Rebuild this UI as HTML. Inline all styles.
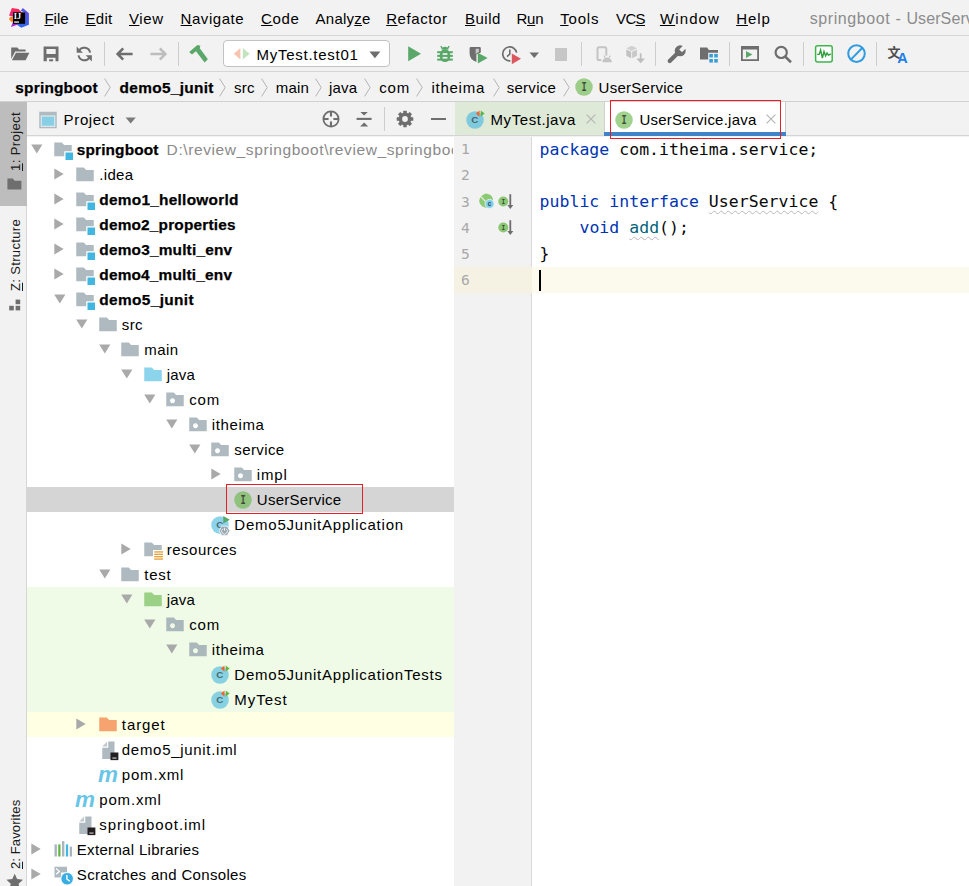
<!DOCTYPE html>
<html lang="en"><head><meta charset="utf-8"><title>springboot - UserService.java</title>
<style>
*{box-sizing:content-box}
html,body{margin:0;padding:0;width:969px;height:886px;overflow:hidden;background:#f2f2f2}
#app{width:969px;height:886px;overflow:hidden;background:#f2f2f2;position:relative;
 font-family:"Liberation Sans",sans-serif;font-size:15px;color:#000;-webkit-font-smoothing:antialiased}
.abs{position:absolute}
.i{position:absolute;display:block;overflow:visible}
.t{position:absolute;white-space:pre;line-height:25px;height:25px}
.b{font-weight:bold;font-size:15.4px;-webkit-text-stroke:.25px #000}
.g{color:#8a8a8a}
.mn{top:6px;line-height:26px}
.mn u{text-decoration-thickness:1px;text-underline-offset:1px}
.vt u{text-decoration-thickness:1px;text-underline-offset:2px}
.bc{top:74.5px}
.tb{top:41.5px}
.hd{top:106.5px}
.tab{top:106.5px}
.vt{position:absolute;font-size:13px;line-height:19px;height:19px;white-space:pre;transform-origin:0 0;transform:rotate(-90deg);color:#1a1a1a}
.ln{position:absolute;left:461px;font-family:"DejaVu Sans Mono","Liberation Mono",monospace;font-size:14.6px;line-height:26px;color:#a8a8a8}
.code{position:absolute;left:539.6px;margin:0;font-family:"DejaVu Sans Mono","Liberation Mono",monospace;font-size:16.5px;line-height:26px;color:#080808;letter-spacing:0.02px}
.k{color:#0033b3}
.m{color:#00627a}
.w{text-decoration:underline wavy #b9b9b9 1px;text-underline-offset:3px}
</style></head>
<body>
<div id="app">
<div class="abs" style="left:0;top:35px;width:969px;height:1px;background:#d6d6d6"></div>
<div class="abs" style="left:0;top:71px;width:969px;height:1px;background:#d6d6d6"></div>
<div class="abs" style="left:0;top:101px;width:969px;height:1px;background:#d1d1d1"></div>
<svg class="i" style="left:8px;top:7px" width="22" height="22" viewBox="0 0 22 22"><defs><linearGradient id="lgb" x1="0" y1="1" x2="1" y2="0"><stop offset="0" stop-color="#2A6BF0"/><stop offset=".6" stop-color="#3F5FE6"/><stop offset="1" stop-color="#8A3FD6"/></linearGradient><linearGradient id="lgp" x1="0" y1="0" x2="0" y2="1"><stop offset="0" stop-color="#FE2857"/><stop offset="1" stop-color="#E5237E"/></linearGradient></defs><path d="M3.9,1 L10.4,1.9 L13,4.6 L13,9 L5,9.8 L1.05,8.5 Z" fill="url(#lgp)"/><path d="M1.8,10.2 L5.4,9.6 L5.4,14.9 L3.2,14.7 L1.05,12.3 Z" fill="#FC801D"/><path d="M5,15 L2.9,19.9 L11.4,17 L11.4,15 Z" fill="#A62BD0"/><path d="M14.8,1 L20.9,6.2 L20.9,17.7 L13.3,20.8 L9.2,18.1 L10,16 L16.6,16 L16.6,5.3 L12.6,3.9 Z" fill="url(#lgb)"/><rect x="5" y="5.3" width="12.1" height="11.5" fill="#000"/><rect x="6.1" y="14.3" width="4.9" height="1.5" fill="#d8d8d8"/><text x="5.8" y="12" textLength="7.3" lengthAdjust="spacingAndGlyphs" font-family="Liberation Serif, serif" font-weight="bold" font-size="9.2" fill="#fff">IJ</text></svg>
<span id="t1" class="t mn" style="left:44.4px;letter-spacing:0.003px;"><u>F</u>ile</span>
<span id="t2" class="t mn" style="left:85.5px;letter-spacing:0.285px;"><u>E</u>dit</span>
<span id="t3" class="t mn" style="left:129px;letter-spacing:0.613px;"><u>V</u>iew</span>
<span id="t4" class="t mn" style="left:180.6px;letter-spacing:0.548px;"><u>N</u>avigate</span>
<span id="t5" class="t mn" style="left:261.1px;letter-spacing:0.631px;"><u>C</u>ode</span>
<span id="t6" class="t mn" style="left:315.6px;letter-spacing:0.232px;">Analy<u>z</u>e</span>
<span id="t7" class="t mn" style="left:386.2px;letter-spacing:0.587px;"><u>R</u>efactor</span>
<span id="t8" class="t mn" style="left:465px;letter-spacing:0.485px;"><u>B</u>uild</span>
<span id="t9" class="t mn" style="left:516.4px;letter-spacing:-0.177px;">R<u>u</u>n</span>
<span id="t10" class="t mn" style="left:560.2px;letter-spacing:0.814px;"><u>T</u>ools</span>
<span id="t11" class="t mn" style="left:616px;letter-spacing:-0.620px;">VC<u>S</u></span>
<span id="t12" class="t mn" style="left:659.9px;letter-spacing:1.138px;"><u>W</u>indow</span>
<span id="t13" class="t mn" style="left:736.2px;letter-spacing:0.931px;"><u>H</u>elp</span>
<span id="t14" class="t mn" style="left:809.7px;color:#8c8c8c;font-size:16px;letter-spacing:.6px;">springboot - <span style="letter-spacing:.1px">UserService.java</span></span>
<svg class="i" style="left:10px;top:44px" width="20" height="20" viewBox="0 0 20 20"><path d="M1.2,3.6 H7.4 L9,5.6 H15.6 V7.6 H5.2 L1.2,15 Z" fill="#6e6e6e"/><path d="M5.9,8.8 H19.4 L15.6,16.2 H1.9 Z" fill="#6e6e6e"/></svg>
<svg class="i" style="left:41px;top:44px" width="20" height="20" viewBox="0 0 20 20"><path fill-rule="evenodd" d="M2.6,2.4 H17.5 V17.3 H2.6 Z M5.4,5.1 V9.9 H14.7 V5.1 Z M5.8,13.8 V17.3 H14.5 V13.8 Z" fill="#6e6e6e"/><rect x="8.1" y="15.3" width="4" height="2" fill="#6e6e6e"/></svg>
<svg class="i" style="left:74px;top:44px" width="20" height="20" viewBox="0 0 20 20"><g transform="translate(20.3,0) scale(-1,1)"><path d="M4.2,8.6 A6,6 0 0 1 15.2,6.6" fill="none" stroke="#6e6e6e" stroke-width="2"/><path d="M15.8,11.4 A6,6 0 0 1 4.8,13.4" fill="none" stroke="#6e6e6e" stroke-width="2"/><path d="M17.6,2.6 V8.8 H11.4 Z" fill="#6e6e6e"/><path d="M2.4,17.4 V11.2 H8.6 Z" fill="#6e6e6e"/></g></svg>
<div class="abs" style="left:104px;top:42px;width:1px;height:24px;background:#cdcdcd"></div>
<svg class="i" style="left:114px;top:44px" width="20" height="20" viewBox="0 0 20 20"><path d="M18.6,10 H4.4 M9.2,4.4 L3.6,10 L9.2,15.6" fill="none" stroke="#6e6e6e" stroke-width="2.5"/></svg>
<svg class="i" style="left:149px;top:44px" width="20" height="20" viewBox="0 0 20 20"><path d="M1.4,10 H15.6 M10.8,4.4 L16.4,10 L10.8,15.6" fill="none" stroke="#bdbdbd" stroke-width="2.5"/></svg>
<div class="abs" style="left:178px;top:42px;width:1px;height:24px;background:#cdcdcd"></div>
<svg class="i" style="left:188px;top:43px" width="22" height="22" viewBox="0 0 22 22"><path d="M1.2,9 L9.4,2 L12.4,2.7 L11.8,5 L4,11.6 Z" fill="#59A869"/><path d="M7.4,7.6 L11.2,4.6 L19.9,16.2 L16.6,19.5 Z" fill="#59A869"/></svg>
<div class="abs" style="left:223px;top:40px;width:165px;height:25.4px;background:#fff;border:1px solid #c2c2c2;border-radius:4px"></div>
<svg class="i" style="left:233px;top:45px" width="18" height="18" viewBox="0 0 18 18"><path d="M7.4,3 V14.6 L0.8,8.8 Z" fill="#F8C4B2"/><path d="M9.8,3 V14.6 L16.6,8.8 Z" fill="#C3E4BF"/></svg>
<span id="t15" class="t tb" style="left:256.6px;letter-spacing:0.727px;">MyTest.test01</span>
<svg class="i" style="left:369.4px;top:50.6px" width="12" height="8" viewBox="0 0 12 8"><path d="M0.4,0.6 H11.4 L5.9,7.2 Z" fill="#6e6e6e"/></svg>
<svg class="i" style="left:404.6px;top:44px" width="20" height="20" viewBox="0 0 20 20"><path d="M3.2,2.2 V17.2 L16,9.7 Z" fill="#59A869"/></svg>
<svg class="i" style="left:435px;top:43.8px" width="20" height="20" viewBox="0 0 20 20"><g fill="#59A869"><ellipse cx="10" cy="11.6" rx="5.4" ry="6.5"/><path d="M6.4,5.6 A3.7,3.7 0 0 1 13.6,5.6 Z"/><rect x="2.2" y="7.2" width="15.6" height="2"/><rect x="2.2" y="10.9" width="15.6" height="2"/><rect x="2.2" y="14.6" width="15.6" height="2"/><path d="M5.2,2.4 L6.4,1.7 L8.3,4.6 L7.1,5.3 Z M14.8,2.4 L13.6,1.7 L11.7,4.6 L12.9,5.3 Z"/></g><rect x="7.6" y="9.2" width="4.8" height="1.7" fill="#f2f2f2"/><rect x="7.6" y="12.9" width="4.8" height="1.7" fill="#f2f2f2"/></svg>
<svg class="i" style="left:468px;top:45px" width="22" height="20" viewBox="0 0 22 20"><path d="M1.6,3.2 Q1.6,2 2.8,2 H11.6 Q12.8,2 12.8,3.2 V7.4 L8.4,9.6 V17 Q1.6,14.6 1.6,8.6 Z" fill="#6e6e6e"/><path d="M7.6,3.8 H11 V7 L7.6,9 Z" fill="#c4c4c4"/><path d="M9.8,7.8 V18.4 L19.6,13.1 Z" fill="#59A869"/></svg>
<svg class="i" style="left:501px;top:44.6px" width="22" height="21" viewBox="0 0 22 21"><path d="M9.4,15.9 A7,7 0 1 1 15.6,7.6" fill="none" stroke="#6e6e6e" stroke-width="1.7"/><path d="M8.8,4.4 V9.2 L6,11.6" fill="none" stroke="#6e6e6e" stroke-width="1.6"/><path d="M10.8,8.4 V19.2 L20,13.8 Z" fill="#DB5860"/></svg>
<svg class="i" style="left:528.5px;top:52px" width="11" height="7" viewBox="0 0 11 7"><path d="M0.5,0.5 H10 L5.25,6 Z" fill="#6e6e6e"/></svg>
<div class="abs" style="left:554.5px;top:48px;width:12.5px;height:12.5px;background:#c6c6c6"></div>
<div class="abs" style="left:581px;top:42px;width:1px;height:24px;background:#cdcdcd"></div>
<svg class="i" style="left:594px;top:44px" width="22" height="20" viewBox="0 0 22 20"><rect x="3.5" y="3.3" width="8.8" height="12.8" rx="1.6" fill="none" stroke="#c4c4c4" stroke-width="2"/><rect x="7.3" y="11.6" width="9" height="8" fill="#f2f2f2"/><path d="M8.3,18.3 A4.8,4.8 0 0 1 17.9,18.3 Z" fill="#c4c4c4"/><path d="M9.8,11.6 L11.2,13.8 M16.4,11.6 L15,13.8" stroke="#c4c4c4" stroke-width="1.1"/></svg>
<svg class="i" style="left:624px;top:44px" width="22" height="20" viewBox="0 0 22 20"><path d="M7.65,1.7 L13,4.3 L7.65,6.9 L2.3,4.3 Z" fill="#d0d0d0"/><path d="M2.3,5.4 L7.2,7.8 V14.3 L2.3,11.8 Z" fill="#c2c2c2"/><path d="M13,5.4 L8.1,7.8 V14.3 L13,11.8 Z" fill="#c9c9c9"/><path d="M15.8,9.2 H17.5 V14.6 H21 L16.65,19.2 L12.3,14.6 H15.8 Z" fill="#bdbdbd"/></svg>
<div class="abs" style="left:655px;top:42px;width:1px;height:24px;background:#cdcdcd"></div>
<svg class="i" style="left:666px;top:43px" width="22" height="22" viewBox="0 0 22 22"><path d="M3.7,18 L12.4,9.4" stroke="#6e6e6e" stroke-width="4.2" stroke-linecap="round"/><circle cx="14.2" cy="7.8" r="5.5" fill="#6e6e6e"/><path d="M13.2,6.4 L18.4,1.2 L21.2,4 L16,9.2 Z" fill="#f2f2f2"/></svg>
<svg class="i" style="left:699px;top:44px" width="22" height="20" viewBox="0 0 22 20"><path d="M1,3.6 H8.2 L9.8,5.9 H19 V8.8 H9.2 V15.5 H1 Z" fill="#6e6e6e"/><g fill="#389FD6"><rect x="10.3" y="9.9" width="3.6" height="3.6"/><rect x="15.2" y="9.9" width="3.6" height="3.6"/><rect x="10.3" y="15" width="3.6" height="3.6"/><rect x="15.2" y="15" width="3.6" height="3.6"/></g></svg>
<div class="abs" style="left:729px;top:42px;width:1px;height:24px;background:#cdcdcd"></div>
<svg class="i" style="left:740px;top:44px" width="20" height="20" viewBox="0 0 20 20"><path fill-rule="evenodd" d="M1,2 H19 V17 H1 Z M2.8,5.6 V15.2 H17.2 V5.6 Z" fill="#6e6e6e"/><path d="M6,7 V14 L12.4,10.5 Z" fill="#59A869"/></svg>
<svg class="i" style="left:773px;top:44px" width="20" height="20" viewBox="0 0 20 20"><circle cx="8.2" cy="8.4" r="5.6" fill="none" stroke="#6e6e6e" stroke-width="2.2"/><path d="M12.2,12.6 L18,18.2" stroke="#6e6e6e" stroke-width="2.6"/></svg>
<div class="abs" style="left:803px;top:42px;width:1px;height:24px;background:#cdcdcd"></div>
<svg class="i" style="left:814px;top:43.5px" width="20" height="20" viewBox="0 0 20 20"><rect x="1.6" y="1.8" width="16.6" height="16.2" rx="2" fill="#fff" stroke="#3DB54A" stroke-width="1.5"/><path d="M3.2,10.4 L5.2,10.4 L6.6,6 L8.4,14 L10,7.4 L11.6,12 L13,9 L14.4,11.2 L16.8,10" fill="none" stroke="#2E9E3B" stroke-width="1.4"/></svg>
<svg class="i" style="left:845.5px;top:43px" width="21" height="21" viewBox="0 0 21 21"><circle cx="10.5" cy="10.6" r="8.3" fill="none" stroke="#2F9BE0" stroke-width="2"/><path d="M4.8,16.6 L16.4,4.8" stroke="#2F9BE0" stroke-width="2"/></svg>
<div class="abs" style="left:876px;top:42px;width:1px;height:24px;background:#cdcdcd"></div>
<svg class="i" style="left:886px;top:44px" width="24" height="21" viewBox="0 0 24 21"><text x="1.4" y="13.2" font-family="Liberation Sans, 'Noto Sans CJK SC', sans-serif" font-weight="bold" font-size="13" fill="#4d4d4d">文</text><text x="16.6" y="19" text-anchor="middle" font-family="Liberation Sans, sans-serif" font-weight="bold" font-size="14.5" fill="#1E7FE6">A</text></svg>
<span id="t16" class="t bc b" style="left:15.3px;letter-spacing:0.214px;">springboot</span>
<span id="t17" class="t bc b" style="left:119.6px;letter-spacing:0.313px;">demo5_junit</span>
<span id="t18" class="t bc" style="left:234.1px;letter-spacing:0.200px;">src</span>
<span id="t19" class="t bc" style="left:275.7px;letter-spacing:0.221px;">main</span>
<span id="t20" class="t bc" style="left:329px;letter-spacing:0.217px;">java</span>
<span id="t21" class="t bc" style="left:379.2px;letter-spacing:0.885px;">com</span>
<span id="t22" class="t bc" style="left:431.5px;letter-spacing:0.734px;">itheima</span>
<span id="t23" class="t bc" style="left:506.7px;letter-spacing:0.283px;">service</span>
<svg class="i" style="left:104px;top:78px" width="7" height="19" viewBox="0 0 7 19"><path d="M0.6,0.6 L6.2,9.5 L0.6,18.4" fill="none" stroke="#b4b4b4" stroke-width="1"/></svg>
<svg class="i" style="left:219px;top:78px" width="7" height="19" viewBox="0 0 7 19"><path d="M0.6,0.6 L6.2,9.5 L0.6,18.4" fill="none" stroke="#b4b4b4" stroke-width="1"/></svg>
<svg class="i" style="left:260.8px;top:78px" width="7" height="19" viewBox="0 0 7 19"><path d="M0.6,0.6 L6.2,9.5 L0.6,18.4" fill="none" stroke="#b4b4b4" stroke-width="1"/></svg>
<svg class="i" style="left:315.3px;top:78px" width="7" height="19" viewBox="0 0 7 19"><path d="M0.6,0.6 L6.2,9.5 L0.6,18.4" fill="none" stroke="#b4b4b4" stroke-width="1"/></svg>
<svg class="i" style="left:363.6px;top:78px" width="7" height="19" viewBox="0 0 7 19"><path d="M0.6,0.6 L6.2,9.5 L0.6,18.4" fill="none" stroke="#b4b4b4" stroke-width="1"/></svg>
<svg class="i" style="left:415.5px;top:78px" width="7" height="19" viewBox="0 0 7 19"><path d="M0.6,0.6 L6.2,9.5 L0.6,18.4" fill="none" stroke="#b4b4b4" stroke-width="1"/></svg>
<svg class="i" style="left:492.8px;top:78px" width="7" height="19" viewBox="0 0 7 19"><path d="M0.6,0.6 L6.2,9.5 L0.6,18.4" fill="none" stroke="#b4b4b4" stroke-width="1"/></svg>
<svg class="i" style="left:563.3px;top:78px" width="7" height="19" viewBox="0 0 7 19"><path d="M0.6,0.6 L6.2,9.5 L0.6,18.4" fill="none" stroke="#b4b4b4" stroke-width="1"/></svg>
<svg class="i" style="left:573.5px;top:76.5px" width="20" height="20" viewBox="0 0 16 16" ><circle cx="8" cy="8" r="7" fill="#62B543" fill-opacity=".6"/><text x="8" y="11.05" transform="translate(2.24,0) scale(.72,1)" text-anchor="middle" font-family="Liberation Mono, monospace" font-weight="bold" font-size="9.6" fill="#231F20" fill-opacity=".75">I</text></svg>
<span id="t24" class="t bc" style="left:598.6px;letter-spacing:0.265px;">UserService</span>
<div class="abs" style="left:27px;top:136.5px;width:427px;height:750px;background:#fff"></div>
<div class="abs" style="left:0;top:102px;width:27px;height:784px;background:#f2f2f2;border-right:1px solid #d6d6d6;box-sizing:border-box"></div>
<div class="abs" style="left:0;top:102px;width:26.5px;height:103.5px;background:#bdbdbd"></div>
<div class="vt" style="left:5.6px;top:171.4px;letter-spacing:.41px"><u>1</u>: Project</div>
<svg class="i" style="left:7px;top:178px" width="15" height="12" viewBox="0 0 15 12"><path d="M0.4,0.6 H5.8 L7.6,2.8 H14.4 V11.6 H0.4 Z" fill="#6e6e6e"/></svg>
<div class="vt" style="left:5.6px;top:291.4px;letter-spacing:.34px"><u>Z</u>: Structure</div>
<svg class="i" style="left:8.5px;top:298.5px" width="12" height="12" viewBox="0 0 12 12"><g fill="#6e6e6e"><rect x="0.2" y="6.8" width="4.6" height="4.6"/><rect x="6.6" y="6.8" width="4.6" height="4.6"/><rect x="6.6" y="0.6" width="4.6" height="4.6"/></g></svg>
<div class="vt" style="left:5.6px;top:869.2px;letter-spacing:.11px"><u>2</u>: Favorites</div>
<svg class="i" style="left:5.9px;top:873.4px" width="17.4" height="17.4" viewBox="0 0 16 16"><path d="M8,0.6 L10.2,5.6 L15.6,6.2 L11.6,9.8 L12.8,15.2 L8,12.4 L3.2,15.2 L4.4,9.8 L0.4,6.2 L5.8,5.6 Z" fill="#6e6e6e"/></svg>
<div class="abs" style="left:27px;top:102px;width:427px;height:33px;background:#f2f2f2;border-bottom:1px solid #d4d4d4"></div>
<svg class="i" style="left:38px;top:109.5px" width="20" height="20" viewBox="0 0 16 16"><path fill-rule="evenodd" d="M1,1.4 H15 V14.6 H1 Z M2.2,4.4 V13.4 H13.8 V4.4 Z" fill="#9AA7B0" fill-opacity=".75"/><rect x="2.9" y="5.2" width="10.2" height="7.4" fill="#40B6E0" fill-opacity=".6"/></svg>
<span id="t25" class="t hd" style="left:63.6px;letter-spacing:0.645px;">Project</span>
<svg class="i" style="left:125px;top:117px" width="12" height="8" viewBox="0 0 12 8"><path d="M0.6,0.6 H10.8 L5.7,6.6 Z" fill="#7a7a7a"/></svg>
<svg class="i" style="left:321px;top:109px" width="20" height="20" viewBox="0 0 20 20"><circle cx="10" cy="10" r="7.6" fill="none" stroke="#6e6e6e" stroke-width="1.8"/><path d="M10,2 V7.6 M10,12.4 V18 M2,10 H7.6 M12.4,10 H18" stroke="#6e6e6e" stroke-width="2.1"/></svg>
<svg class="i" style="left:354px;top:109px" width="20" height="20" viewBox="0 0 20 20"><path d="M2.6,9.9 H17.6" stroke="#6e6e6e" stroke-width="2.1"/><path d="M6.4,2.9 H13.8 L10.1,6.4 Z M6.1,17.4 H14.2 L10.15,13.4 Z" fill="#6e6e6e"/></svg>
<div class="abs" style="left:384.2px;top:107px;width:1px;height:24px;background:#cdcdcd"></div>
<svg class="i" style="left:395px;top:109px" width="20" height="20" viewBox="0 0 20 20"><rect x="8.3" y="1.7" width="3.4" height="16.6" rx=".5" transform="rotate(0 10 10)" fill="#6e6e6e"/><rect x="8.3" y="1.7" width="3.4" height="16.6" rx=".5" transform="rotate(45 10 10)" fill="#6e6e6e"/><rect x="8.3" y="1.7" width="3.4" height="16.6" rx=".5" transform="rotate(90 10 10)" fill="#6e6e6e"/><rect x="8.3" y="1.7" width="3.4" height="16.6" rx=".5" transform="rotate(135 10 10)" fill="#6e6e6e"/><circle cx="10" cy="10" r="6.4" fill="#6e6e6e"/><circle cx="10" cy="10" r="2.9" fill="#f2f2f2"/></svg>
<div class="abs" style="left:430.5px;top:118px;width:15px;height:2.4px;background:#6e6e6e"></div>
<div class="abs" style="left:27px;top:587px;width:427px;height:125px;background:#effae7"></div>
<div class="abs" style="left:27px;top:712px;width:427px;height:25px;background:#ffffe4"></div>
<div class="abs" style="left:27px;top:487px;width:427px;height:25px;background:#d5d5d5"></div>
<svg class="i" style="left:31.2px;top:143.6px" width="12" height="10" viewBox="0 0 12 10"><path d="M0.2,0.6 H11.4 L5.8,9.6 Z" fill="#a9a9a9"/></svg>
<svg class="i" style="left:52.75px;top:139.5px" width="20" height="20" viewBox="0 0 16 16" ><path d="M1,2 H7 L8.9,4 H15 V9 H9 V13 H1 Z" fill="#9AA7B0" fill-opacity=".8"/><rect x="10" y="10" width="6" height="6" fill="#40B6E0"/></svg>
<span id="t26" class="t tr b" style="left:76.8px;letter-spacing:0.134px;top:137px;">springboot</span>
<span id="t27" class="t tr g" style="left:166.6px;top:137px;width:286.79999999999995px;overflow:hidden;font-size:15.5px;letter-spacing:0.6px;">D:\review_springboot\review_springboot\springboot</span>
<svg class="i" style="left:53.7px;top:167.9px" width="10" height="12" viewBox="0 0 10 12"><path d="M0.3,0.4 V11.4 L9.7,5.9 Z" fill="#a9a9a9"/></svg>
<svg class="i" style="left:75.25px;top:164.5px" width="20" height="20" viewBox="0 0 16 16" ><path d="M1,2 H7 L8.9,4 H15 V13 H1 Z" fill="#9AA7B0" fill-opacity="0.8"/></svg>
<span id="t28" class="t tr" style="left:99.3px;letter-spacing:0.294px;top:162px;">.idea</span>
<svg class="i" style="left:53.7px;top:192.9px" width="10" height="12" viewBox="0 0 10 12"><path d="M0.3,0.4 V11.4 L9.7,5.9 Z" fill="#a9a9a9"/></svg>
<svg class="i" style="left:75.25px;top:189.5px" width="20" height="20" viewBox="0 0 16 16" ><path d="M1,2 H7 L8.9,4 H15 V9 H9 V13 H1 Z" fill="#9AA7B0" fill-opacity=".8"/><rect x="10" y="10" width="6" height="6" fill="#40B6E0"/></svg>
<span id="t29" class="t tr b" style="left:99.3px;letter-spacing:0.267px;top:187px;">demo1_helloworld</span>
<svg class="i" style="left:53.7px;top:217.9px" width="10" height="12" viewBox="0 0 10 12"><path d="M0.3,0.4 V11.4 L9.7,5.9 Z" fill="#a9a9a9"/></svg>
<svg class="i" style="left:75.25px;top:214.5px" width="20" height="20" viewBox="0 0 16 16" ><path d="M1,2 H7 L8.9,4 H15 V9 H9 V13 H1 Z" fill="#9AA7B0" fill-opacity=".8"/><rect x="10" y="10" width="6" height="6" fill="#40B6E0"/></svg>
<span id="t30" class="t tr b" style="left:99.3px;letter-spacing:0.185px;top:212px;">demo2_properties</span>
<svg class="i" style="left:53.7px;top:242.9px" width="10" height="12" viewBox="0 0 10 12"><path d="M0.3,0.4 V11.4 L9.7,5.9 Z" fill="#a9a9a9"/></svg>
<svg class="i" style="left:75.25px;top:239.5px" width="20" height="20" viewBox="0 0 16 16" ><path d="M1,2 H7 L8.9,4 H15 V9 H9 V13 H1 Z" fill="#9AA7B0" fill-opacity=".8"/><rect x="10" y="10" width="6" height="6" fill="#40B6E0"/></svg>
<span id="t31" class="t tr b" style="left:99.3px;letter-spacing:0.199px;top:237px;">demo3_multi_env</span>
<svg class="i" style="left:53.7px;top:267.9px" width="10" height="12" viewBox="0 0 10 12"><path d="M0.3,0.4 V11.4 L9.7,5.9 Z" fill="#a9a9a9"/></svg>
<svg class="i" style="left:75.25px;top:264.5px" width="20" height="20" viewBox="0 0 16 16" ><path d="M1,2 H7 L8.9,4 H15 V9 H9 V13 H1 Z" fill="#9AA7B0" fill-opacity=".8"/><rect x="10" y="10" width="6" height="6" fill="#40B6E0"/></svg>
<span id="t32" class="t tr b" style="left:99.3px;letter-spacing:0.192px;top:262px;">demo4_multi_env</span>
<svg class="i" style="left:53.7px;top:293.6px" width="12" height="10" viewBox="0 0 12 10"><path d="M0.2,0.6 H11.4 L5.8,9.6 Z" fill="#a9a9a9"/></svg>
<svg class="i" style="left:75.25px;top:289.5px" width="20" height="20" viewBox="0 0 16 16" ><path d="M1,2 H7 L8.9,4 H15 V9 H9 V13 H1 Z" fill="#9AA7B0" fill-opacity=".8"/><rect x="10" y="10" width="6" height="6" fill="#40B6E0"/></svg>
<span id="t33" class="t tr b" style="left:99.3px;letter-spacing:0.368px;top:287px;">demo5_junit</span>
<svg class="i" style="left:76.2px;top:318.6px" width="12" height="10" viewBox="0 0 12 10"><path d="M0.2,0.6 H11.4 L5.8,9.6 Z" fill="#a9a9a9"/></svg>
<svg class="i" style="left:97.75px;top:314.5px" width="20" height="20" viewBox="0 0 16 16" ><path d="M1,2 H7 L8.9,4 H15 V13 H1 Z" fill="#9AA7B0" fill-opacity="0.8"/></svg>
<span id="t34" class="t tr" style="left:121.8px;letter-spacing:0.333px;top:312px;">src</span>
<svg class="i" style="left:98.7px;top:343.6px" width="12" height="10" viewBox="0 0 12 10"><path d="M0.2,0.6 H11.4 L5.8,9.6 Z" fill="#a9a9a9"/></svg>
<svg class="i" style="left:120.25px;top:339.5px" width="20" height="20" viewBox="0 0 16 16" ><path d="M1,2 H7 L8.9,4 H15 V13 H1 Z" fill="#9AA7B0" fill-opacity="0.8"/></svg>
<span id="t35" class="t tr" style="left:144.3px;letter-spacing:0.446px;top:337px;">main</span>
<svg class="i" style="left:121.2px;top:368.6px" width="12" height="10" viewBox="0 0 12 10"><path d="M0.2,0.6 H11.4 L5.8,9.6 Z" fill="#a9a9a9"/></svg>
<svg class="i" style="left:142.75px;top:364.5px" width="20" height="20" viewBox="0 0 16 16" ><path d="M1,2 H7 L8.9,4 H15 V13 H1 Z" fill="#40B6E0" fill-opacity="0.6"/></svg>
<span id="t36" class="t tr" style="left:166.8px;letter-spacing:0.167px;top:362px;">java</span>
<svg class="i" style="left:143.7px;top:393.6px" width="12" height="10" viewBox="0 0 12 10"><path d="M0.2,0.6 H11.4 L5.8,9.6 Z" fill="#a9a9a9"/></svg>
<svg class="i" style="left:165.25px;top:389.5px" width="20" height="20" viewBox="0 0 16 16" ><path fill-rule="evenodd" d="M1,2 H7 L8.9,4 H15 V13 H1 Z M6,6.6 a2,2 0 1 0 0.001,0 Z" fill="#9AA7B0" fill-opacity=".8"/></svg>
<span id="t37" class="t tr" style="left:189.3px;letter-spacing:0.785px;top:387px;">com</span>
<svg class="i" style="left:166.2px;top:418.6px" width="12" height="10" viewBox="0 0 12 10"><path d="M0.2,0.6 H11.4 L5.8,9.6 Z" fill="#a9a9a9"/></svg>
<svg class="i" style="left:187.75px;top:414.5px" width="20" height="20" viewBox="0 0 16 16" ><path fill-rule="evenodd" d="M1,2 H7 L8.9,4 H15 V13 H1 Z M6,6.6 a2,2 0 1 0 0.001,0 Z" fill="#9AA7B0" fill-opacity=".8"/></svg>
<span id="t38" class="t tr" style="left:211.8px;letter-spacing:0.634px;top:412px;">itheima</span>
<svg class="i" style="left:188.7px;top:443.6px" width="12" height="10" viewBox="0 0 12 10"><path d="M0.2,0.6 H11.4 L5.8,9.6 Z" fill="#a9a9a9"/></svg>
<svg class="i" style="left:210.25px;top:439.5px" width="20" height="20" viewBox="0 0 16 16" ><path fill-rule="evenodd" d="M1,2 H7 L8.9,4 H15 V13 H1 Z M6,6.6 a2,2 0 1 0 0.001,0 Z" fill="#9AA7B0" fill-opacity=".8"/></svg>
<span id="t39" class="t tr" style="left:234.3px;letter-spacing:0.383px;top:437px;">service</span>
<svg class="i" style="left:211.2px;top:467.9px" width="10" height="12" viewBox="0 0 10 12"><path d="M0.3,0.4 V11.4 L9.7,5.9 Z" fill="#a9a9a9"/></svg>
<svg class="i" style="left:232.75px;top:464.5px" width="20" height="20" viewBox="0 0 16 16" ><path fill-rule="evenodd" d="M1,2 H7 L8.9,4 H15 V13 H1 Z M6,6.6 a2,2 0 1 0 0.001,0 Z" fill="#9AA7B0" fill-opacity=".8"/></svg>
<span id="t40" class="t tr" style="left:256.8px;letter-spacing:0.871px;top:462px;">impl</span>
<svg class="i" style="left:232.75px;top:489.5px" width="20" height="20" viewBox="0 0 16 16" ><circle cx="8" cy="8" r="7" fill="#62B543" fill-opacity=".6"/><text x="8" y="11.05" transform="translate(2.24,0) scale(.72,1)" text-anchor="middle" font-family="Liberation Mono, monospace" font-weight="bold" font-size="9.6" fill="#231F20" fill-opacity=".75">I</text></svg>
<span id="t41" class="t tr" style="left:256.8px;letter-spacing:0.265px;top:487px;">UserService</span>
<svg class="i" style="left:210.25px;top:514.5px" width="20" height="20" viewBox="0 0 16 16" ><circle cx="8" cy="8" r="7" fill="#40B6E0" fill-opacity=".6"/><text x="7.75" y="10.75" text-anchor="middle" font-family="Liberation Sans, sans-serif" font-weight="bold" font-size="7.9" fill="#231F20" fill-opacity=".62">C</text><path d="M10.6,0.8 V6.7 L15.9,3.75 Z" fill="#59A869"/><path d="M9.4,8.9 H13.8 L15.9,12.6 L13.8,16.3 H9.4 L7.3,12.6 Z" fill="#9AA7B0" stroke="#f4f8fa" stroke-width=".7"/><path d="M10.3,11 a2.3,2.3 0 1 0 2.6,0 M11.6,10.2 V12.6" stroke="#fff" stroke-opacity=".8" stroke-width=".8" fill="none"/></svg>
<span id="t42" class="t tr" style="left:234.3px;letter-spacing:0.770px;top:512px;">Demo5JunitApplication</span>
<svg class="i" style="left:121.2px;top:542.9px" width="10" height="12" viewBox="0 0 10 12"><path d="M0.3,0.4 V11.4 L9.7,5.9 Z" fill="#a9a9a9"/></svg>
<svg class="i" style="left:142.75px;top:539.5px" width="20" height="20" viewBox="0 0 16 16" ><path d="M1,2 H7 L8.9,4 H15 V8 H8 V13 H1 Z" fill="#9AA7B0" fill-opacity=".8"/><g fill="#E6A23C"><rect x="9" y="9" width="7" height="1.1"/><rect x="9" y="10.9" width="7" height="1.1"/><rect x="9" y="12.8" width="7" height="1.1"/><rect x="9" y="14.7" width="7" height="1.1"/></g></svg>
<span id="t43" class="t tr" style="left:166.8px;letter-spacing:0.493px;top:537px;">resources</span>
<svg class="i" style="left:98.7px;top:568.6px" width="12" height="10" viewBox="0 0 12 10"><path d="M0.2,0.6 H11.4 L5.8,9.6 Z" fill="#a9a9a9"/></svg>
<svg class="i" style="left:120.25px;top:564.5px" width="20" height="20" viewBox="0 0 16 16" ><path d="M1,2 H7 L8.9,4 H15 V13 H1 Z" fill="#9AA7B0" fill-opacity="0.8"/></svg>
<span id="t44" class="t tr" style="left:144.3px;letter-spacing:0.753px;top:562px;">test</span>
<svg class="i" style="left:121.2px;top:593.6px" width="12" height="10" viewBox="0 0 12 10"><path d="M0.2,0.6 H11.4 L5.8,9.6 Z" fill="#a9a9a9"/></svg>
<svg class="i" style="left:142.75px;top:589.5px" width="20" height="20" viewBox="0 0 16 16" ><path d="M1,2 H7 L8.9,4 H15 V13 H1 Z" fill="#62B543" fill-opacity="0.6"/></svg>
<span id="t45" class="t tr" style="left:166.8px;letter-spacing:0.167px;top:587px;">java</span>
<svg class="i" style="left:143.7px;top:618.6px" width="12" height="10" viewBox="0 0 12 10"><path d="M0.2,0.6 H11.4 L5.8,9.6 Z" fill="#a9a9a9"/></svg>
<svg class="i" style="left:165.25px;top:614.5px" width="20" height="20" viewBox="0 0 16 16" ><path fill-rule="evenodd" d="M1,2 H7 L8.9,4 H15 V13 H1 Z M6,6.6 a2,2 0 1 0 0.001,0 Z" fill="#9AA7B0" fill-opacity=".8"/></svg>
<span id="t46" class="t tr" style="left:189.3px;letter-spacing:0.785px;top:612px;">com</span>
<svg class="i" style="left:166.2px;top:643.6px" width="12" height="10" viewBox="0 0 12 10"><path d="M0.2,0.6 H11.4 L5.8,9.6 Z" fill="#a9a9a9"/></svg>
<svg class="i" style="left:187.75px;top:639.5px" width="20" height="20" viewBox="0 0 16 16" ><path fill-rule="evenodd" d="M1,2 H7 L8.9,4 H15 V13 H1 Z M6,6.6 a2,2 0 1 0 0.001,0 Z" fill="#9AA7B0" fill-opacity=".8"/></svg>
<span id="t47" class="t tr" style="left:211.8px;letter-spacing:0.634px;top:637px;">itheima</span>
<svg class="i" style="left:210.25px;top:664.5px" width="20" height="20" viewBox="0 0 16 16" ><circle cx="8" cy="8" r="7" fill="#40B6E0" fill-opacity=".6"/><text x="7.75" y="10.75" text-anchor="middle" font-family="Liberation Sans, sans-serif" font-weight="bold" font-size="7.9" fill="#231F20" fill-opacity=".62">C</text><path d="M11.6,0.3 V5.3 L8.7,2.8 Z" fill="#F0642B"/><path d="M12.6,0.3 V5.3 L15.7,2.8 Z" fill="#62B543"/></svg>
<span id="t48" class="t tr" style="left:234.3px;letter-spacing:0.772px;top:662px;">Demo5JunitApplicationTests</span>
<svg class="i" style="left:210.25px;top:689.5px" width="20" height="20" viewBox="0 0 16 16" ><circle cx="8" cy="8" r="7" fill="#40B6E0" fill-opacity=".6"/><text x="7.75" y="10.75" text-anchor="middle" font-family="Liberation Sans, sans-serif" font-weight="bold" font-size="7.9" fill="#231F20" fill-opacity=".62">C</text><path d="M11.6,0.3 V5.3 L8.7,2.8 Z" fill="#F0642B"/><path d="M12.6,0.3 V5.3 L15.7,2.8 Z" fill="#62B543"/></svg>
<span id="t49" class="t tr" style="left:234.3px;letter-spacing:0.981px;top:687px;">MyTest</span>
<svg class="i" style="left:76.2px;top:717.9px" width="10" height="12" viewBox="0 0 10 12"><path d="M0.3,0.4 V11.4 L9.7,5.9 Z" fill="#a9a9a9"/></svg>
<svg class="i" style="left:97.75px;top:714.5px" width="20" height="20" viewBox="0 0 16 16" ><path d="M1,2 H7 L8.9,4 H15 V13 H1 Z" fill="#F26522" fill-opacity="0.6"/></svg>
<span id="t50" class="t tr" style="left:121.8px;letter-spacing:0.923px;top:712px;">target</span>
<svg class="i" style="left:97.75px;top:739.5px" width="20" height="20" viewBox="0 0 16 16" ><path d="M8.2,1.1 H13.2 V15.1 H3.4 V6.2 H8.2 Z" fill="#9AA7B0" fill-opacity=".8"/><path d="M7.3,1.1 L3.4,5.2 H7.3 Z" fill="#9AA7B0" fill-opacity=".6"/><rect x="10" y="10" width="6.3" height="6.1" fill="#231F20"/><rect x="11.5" y="14" width="3.3" height=".9" fill="#d0d0d0"/></svg>
<span id="t51" class="t tr" style="left:121.8px;letter-spacing:0.702px;top:737px;">demo5_junit.iml</span>
<svg class="i" style="left:97.75px;top:764.5px" width="20" height="20" viewBox="0 0 16 16" ><text x="8" y="13.4" text-anchor="middle" font-family="Liberation Sans, sans-serif" font-style="italic" font-weight="bold" font-size="18" fill="#40B6E0" fill-opacity=".8">m</text></svg>
<span id="t52" class="t tr" style="left:121.8px;letter-spacing:0.816px;top:762px;">pom.xml</span>
<svg class="i" style="left:75.25px;top:789.5px" width="20" height="20" viewBox="0 0 16 16" ><text x="8" y="13.4" text-anchor="middle" font-family="Liberation Sans, sans-serif" font-style="italic" font-weight="bold" font-size="18" fill="#40B6E0" fill-opacity=".8">m</text></svg>
<span id="t53" class="t tr" style="left:99.3px;letter-spacing:0.816px;top:787px;">pom.xml</span>
<svg class="i" style="left:75.25px;top:814.5px" width="20" height="20" viewBox="0 0 16 16" ><path d="M8.2,1.1 H13.2 V15.1 H3.4 V6.2 H8.2 Z" fill="#9AA7B0" fill-opacity=".8"/><path d="M7.3,1.1 L3.4,5.2 H7.3 Z" fill="#9AA7B0" fill-opacity=".6"/><rect x="10" y="10" width="6.3" height="6.1" fill="#231F20"/><rect x="11.5" y="14" width="3.3" height=".9" fill="#d0d0d0"/></svg>
<span id="t54" class="t tr" style="left:99.3px;letter-spacing:0.958px;top:812px;">springboot.iml</span>
<svg class="i" style="left:31.2px;top:842.9px" width="10" height="12" viewBox="0 0 10 12"><path d="M0.3,0.4 V11.4 L9.7,5.9 Z" fill="#a9a9a9"/></svg>
<svg class="i" style="left:52.75px;top:839.5px" width="20" height="20" viewBox="0 0 16 16" ><rect x="1.2" y="3.5" width="1.9" height="9.7" fill="#9AA7B0" fill-opacity=".85"/><rect x="4.2" y="3.5" width="1.8" height="9.7" fill="#62B543"/><rect x="7.2" y="0.9" width="1.9" height="12.3" fill="#9AA7B0" fill-opacity=".85"/><rect x="10.3" y="3.5" width="1.8" height="9.7" fill="#40B6E0"/><rect x="13.4" y="5.3" width="1.8" height="7.9" fill="#9AA7B0" fill-opacity=".85"/></svg>
<span id="t55" class="t tr" style="left:76.8px;letter-spacing:0.321px;top:837px;">External Libraries</span>
<svg class="i" style="left:31.2px;top:867.9px" width="10" height="12" viewBox="0 0 10 12"><path d="M0.3,0.4 V11.4 L9.7,5.9 Z" fill="#a9a9a9"/></svg>
<svg class="i" style="left:52.75px;top:864.5px" width="20" height="20" viewBox="0 0 16 16" ><path d="M1.2,1.4 H11.2 V6 H6.4 V10 H1.2 Z" fill="#9AA7B0" fill-opacity=".8"/><path d="M2.5,2.8 L5.1,5.1 L2.5,7.4" stroke="#fff" stroke-width="1" fill="none"/><circle cx="11.3" cy="11" r="5" fill="#3AAEE2" stroke="#fff" stroke-width=".7"/><path d="M11.1,8 V11.2 L13.4,13" stroke="#fff" stroke-width="1.1" fill="none"/></svg>
<span id="t56" class="t tr" style="left:76.8px;letter-spacing:0.328px;top:862px;">Scratches and Consoles</span>
<div class="abs" style="left:454px;top:102px;width:515px;height:33px;background:#f2f2f2;border-bottom:1px solid #d4d4d4"></div>
<div class="abs" style="left:454.8px;top:102px;width:149.2px;height:33px;background:#dfe9d7"></div>
<div class="abs" style="left:604px;top:102px;width:182px;height:33px;background:#fff"></div>
<div class="abs" style="left:604px;top:132px;width:182px;height:4px;background:#4083C9"></div>
<div class="abs" style="left:604px;top:102px;width:1px;height:30px;background:#d2d2d2"></div>
<div class="abs" style="left:785px;top:102px;width:1px;height:30px;background:#cbcbcb"></div>
<svg class="i" style="left:465.3px;top:109.6px" width="20" height="20" viewBox="0 0 16 16" ><circle cx="8" cy="8" r="7" fill="#40B6E0" fill-opacity=".6"/><text x="7.75" y="10.75" text-anchor="middle" font-family="Liberation Sans, sans-serif" font-weight="bold" font-size="7.9" fill="#231F20" fill-opacity=".62">C</text><path d="M11.6,0.3 V5.3 L8.7,2.8 Z" fill="#F0642B"/><path d="M12.6,0.3 V5.3 L15.7,2.8 Z" fill="#62B543"/></svg>
<span id="t57" class="t tab" style="left:490.5px;letter-spacing:0.572px;">MyTest.java</span>
<svg class="i" style="left:614.3px;top:109.8px" width="20" height="20" viewBox="0 0 16 16" ><circle cx="8" cy="8" r="7" fill="#62B543" fill-opacity=".6"/><text x="8" y="11.05" transform="translate(2.24,0) scale(.72,1)" text-anchor="middle" font-family="Liberation Mono, monospace" font-weight="bold" font-size="9.6" fill="#231F20" fill-opacity=".75">I</text></svg>
<span id="t58" class="t tab" style="left:639.5px;letter-spacing:0.227px;">UserService.java</span>
<svg class="i" style="left:585.6px;top:113.8px" width="10" height="10" viewBox="0 0 10 10"><path d="M0.6,0.6 L9.4,9.4 M9.4,0.6 L0.6,9.4" stroke="#b3b3b3" stroke-width="1.1"/></svg>
<svg class="i" style="left:766.3px;top:113.8px" width="10" height="10" viewBox="0 0 10 10"><path d="M0.6,0.6 L9.4,9.4 M9.4,0.6 L0.6,9.4" stroke="#b3b3b3" stroke-width="1.1"/></svg>
<div class="abs" style="left:454px;top:136.5px;width:515px;height:750px;background:#fff"></div>
<div class="abs" style="left:454px;top:136.5px;width:77px;height:750px;background:#f2f2f2;border-right:1px solid #d9d9d9"></div>
<div class="abs" style="left:454px;top:267px;width:78px;height:26px;background:#f5f2e3"></div>
<div class="abs" style="left:532px;top:267px;width:437px;height:26px;background:#fcfaed"></div>
<div class="abs" style="left:539px;top:270px;width:2px;height:21px;background:#000"></div>
<span class="ln" style="top:136.3px">1</span>
<span class="ln" style="top:162.4px">2</span>
<span class="ln" style="top:188.5px">3</span>
<span class="ln" style="top:214.6px">4</span>
<span class="ln" style="top:240.7px">5</span>
<span class="ln" style="top:266.8px">6</span>
<pre class="code" style="top:136.5px"><span class="k">package</span> com.itheima.service;</pre>
<pre class="code" style="top:188.7px"><span class="k">public</span> <span class="k">interface</span> <span class="w">UserService</span> {</pre>
<pre class="code" style="top:214.8px">    <span class="k">void</span> <span class="w m">add</span>();</pre>
<pre class="code" style="top:240.9px">}</pre>
<svg class="i" style="left:478px;top:193.4px" width="17" height="17" viewBox="0 0 17 17"><path d="M7.4,0.6 Q13.6,0.8 14.9,6 Q15.6,11.4 11,14.2 Q5,16 1.8,10.6 Q-0.6,4.4 7.4,0.6 Z" fill="#8CCB74"/><path d="M1.9,2.7 L7.4,8.4" stroke="#f2f2f2" stroke-width="1.1" fill="none"/><circle cx="11.6" cy="10.9" r="4.5" fill="#7FD0EA" stroke="#f2f2f2" stroke-width=".8"/><text x="11.6" y="13" text-anchor="middle" font-family="Liberation Sans, sans-serif" font-weight="bold" font-size="6.4" fill="#2b4a57">c</text></svg>
<svg class="i" style="left:497.6px;top:194px" width="17" height="16" viewBox="0 0 17 16"><circle cx="5.3" cy="7.5" r="5" fill="#62B543" fill-opacity=".72"/><text x="5.3" y="10.2" transform="translate(1.06,0) scale(.8,1)" text-anchor="middle" font-family="Liberation Mono, monospace" font-weight="bold" font-size="7.6" fill="#231F20" fill-opacity=".8">I</text><rect x="11.4" y="0.2" width="1.8" height="11.6" fill="#6e6e6e"/><path d="M9.3,11 H15.3 L12.3,14.9 Z" fill="#6e6e6e"/></svg>
<svg class="i" style="left:497.6px;top:220px" width="17" height="16" viewBox="0 0 17 16"><circle cx="5.3" cy="7.5" r="5" fill="#62B543" fill-opacity=".72"/><text x="5.3" y="10.2" transform="translate(1.06,0) scale(.8,1)" text-anchor="middle" font-family="Liberation Mono, monospace" font-weight="bold" font-size="7.6" fill="#231F20" fill-opacity=".8">I</text><rect x="11.4" y="0.2" width="1.8" height="11.6" fill="#6e6e6e"/><path d="M9.3,11 H15.3 L12.3,14.9 Z" fill="#6e6e6e"/></svg>
<div class="abs" style="left:226px;top:484px;width:134.6px;height:28px;border:1.2px solid #ea1c24"></div>
<div class="abs" style="left:610px;top:100.2px;width:169px;height:36.6px;border:1.2px solid #ea1c24"></div>
</div>
</body></html>
